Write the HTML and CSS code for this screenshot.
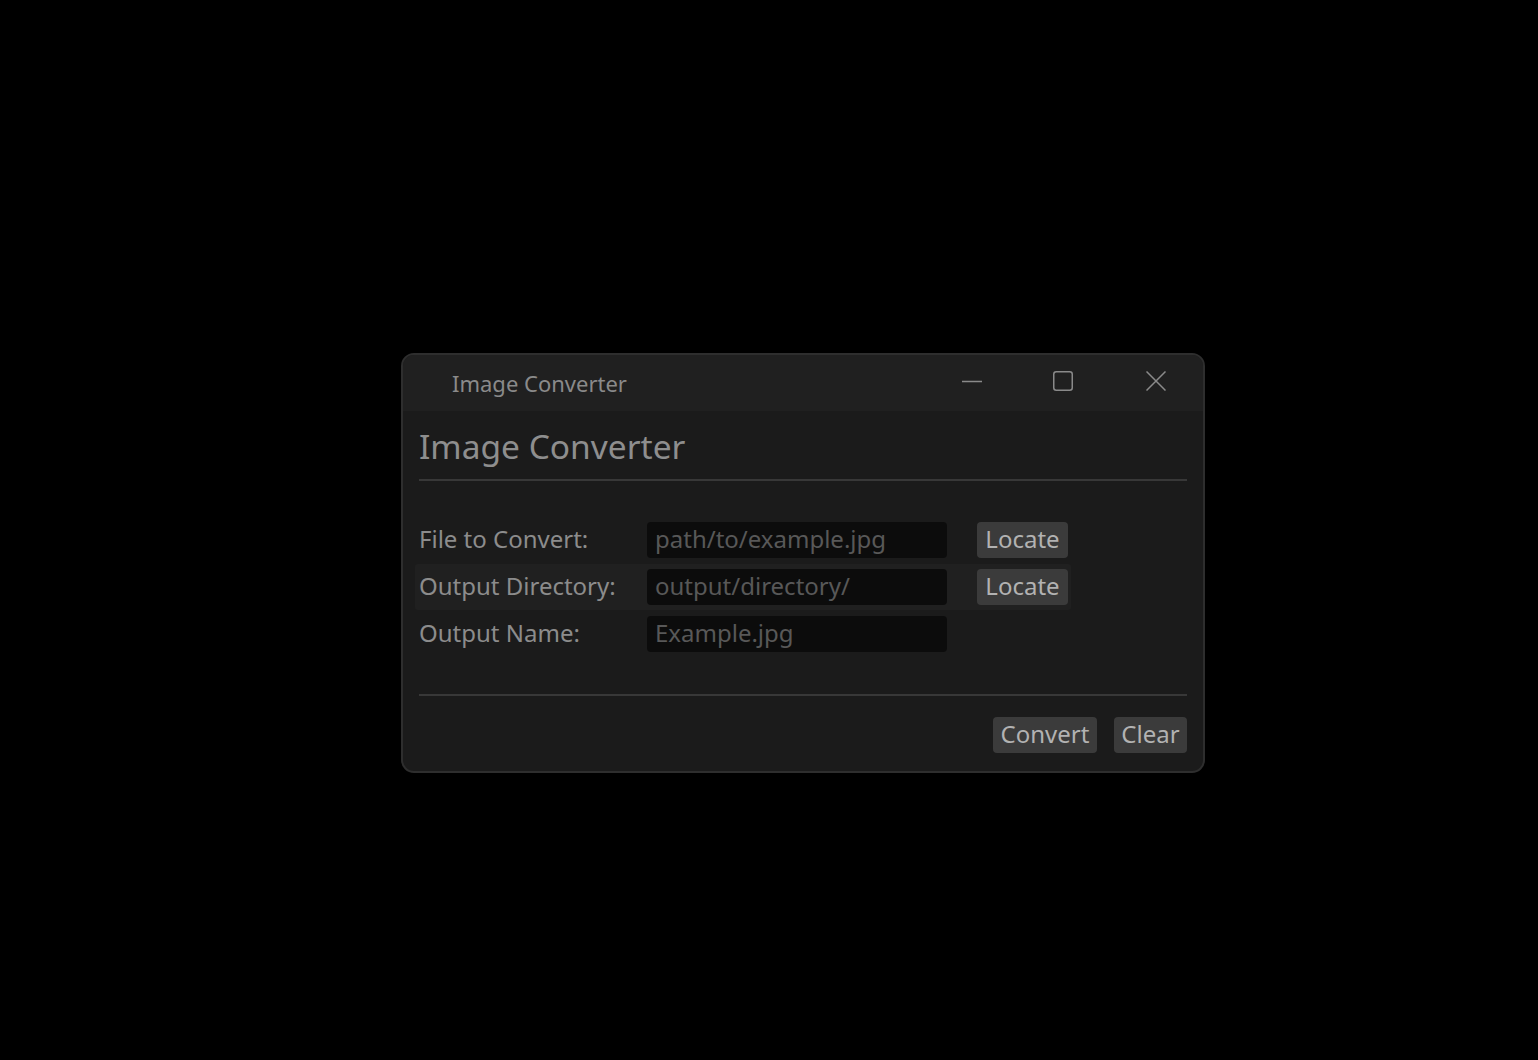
FILE: index.html
```html
<!DOCTYPE html>
<html>
<head>
<meta charset="utf-8">
<link rel="stylesheet" href="styles.css">
</head>
<body>
<div class="window">
  <div class="titlebar">
    <span class="title">Image Converter</span>
    <div class="controls">
      <span class="ctl"><svg width="20" height="20" viewBox="0 0 20 20"><line x1="0" y1="10.5" x2="20" y2="10.5" stroke="#8a8a8a" stroke-width="1.5"/></svg></span>
      <span class="ctl"><svg width="20" height="20" viewBox="0 0 20 20"><rect x="0.75" y="0.75" width="18.5" height="18.5" rx="2.5" fill="none" stroke="#8a8a8a" stroke-width="1.5"/></svg></span>
      <span class="ctl"><svg width="20" height="20" viewBox="0 0 20 20"><path d="M0.5 0.5 L19.5 19.5 M19.5 0.5 L0.5 19.5" stroke="#8a8a8a" stroke-width="1.5"/></svg></span>
    </div>
  </div>
  <div class="body">
    <h1 class="heading">Image Converter</h1>
    <div class="sep"></div>
    <div class="form">
      <div class="row">
        <span class="label">File to Convert:</span>
        <span class="input">path/to/example.jpg</span>
        <span class="btn locate">Locate</span>
      </div>
      <div class="row hl">
        <span class="label">Output Directory:</span>
        <span class="input">output/directory/</span>
        <span class="btn locate">Locate</span>
      </div>
      <div class="row">
        <span class="label">Output Name:</span>
        <span class="input">Example.jpg</span>
      </div>
    </div>
    <div class="sep sep2"></div>
    <div class="actions">
      <span class="btn small convert">Convert</span>
      <span class="btn small clear">Clear</span>
    </div>
  </div>
</div>
</body>
</html>
```
FILE: styles.css
```css
html, body {
  margin: 0;
  padding: 0;
  background: #000;
  width: 1538px;
  height: 1060px;
  font-family: "Noto Sans", "Open Sans", sans-serif;
}
body {
  display: flex;
  padding-top: 353px;
  padding-left: 401px;
  box-sizing: border-box;
}
.window {
  width: 804px;
  height: 420px;
  box-sizing: border-box;
  border: 2px solid #2e2e2e;
  border-radius: 13px;
  background: #1b1b1b;
  overflow: hidden;
  display: flex;
  flex-direction: column;
}
.titlebar {
  height: 56px;
  background: #202020;
  display: flex;
  align-items: center;
  padding-left: 49px;
  flex-shrink: 0;
}
.title {
  color: #8a8a8a;
  font-size: 22px;
  margin-bottom: 0px;
}
.controls {
  margin-left: auto;
  display: flex;
  align-items: center;
  margin-right: 37px;
  margin-bottom: 5px;
  gap: 71px;
}
.ctl {
  display: flex;
  width: 20px;
  height: 20px;
}
.ctl + .ctl + .ctl {
  margin-left: 2px;
}
.body {
  padding: 0 16px 0 12px;
  display: flex;
  flex-direction: column;
}
.heading {
  margin: 13px 0 0 4px;
  font-weight: normal;
  font-size: 33.5px;
  line-height: 44px;
  color: #8e8e8e;
}
.sep {
  height: 2px;
  background: #383838;
  margin: 11px 0 0 4px;
}
.form {
  margin-top: 36px;
  display: flex;
  flex-direction: column;
  gap: 1px;
  width: 656px;
}
.row {
  display: flex;
  align-items: center;
  height: 46px;
  padding-left: 4px;
  border-radius: 3px;
}
.row.hl {
  background: #202020;
}
.label {
  width: 228px;
  color: #8c8c8c;
  font-size: 24px;
  line-height: 32px;
  margin-bottom: 3px;
}
.input {
  width: 300px;
  height: 36px;
  box-sizing: border-box;
  background: #0c0c0c;
  border-radius: 4px;
  color: #585858;
  font-size: 24px;
  line-height: 34px;
  padding-left: 8px;
  white-space: nowrap;
  overflow: hidden;
}
.btn {
  margin-left: 30px;
  height: 36px;
  box-sizing: border-box;
  background: #3b3b3b;
  border-radius: 4px;
  color: #b2b2b2;
  font-size: 24px;
  line-height: 34px;
  padding: 0;
  text-align: center;
}
.btn.locate {
  width: 91px;
}
.sep2 {
  margin-top: 37px;
}
.actions {
  display: flex;
  justify-content: flex-end;
  gap: 17px;
  margin-top: 21px;
}
.btn.small {
  margin-left: 0;
  font-stretch: condensed;
}
.btn.convert {
  width: 104px;
}
.btn.clear {
  width: 73px;
}
```
